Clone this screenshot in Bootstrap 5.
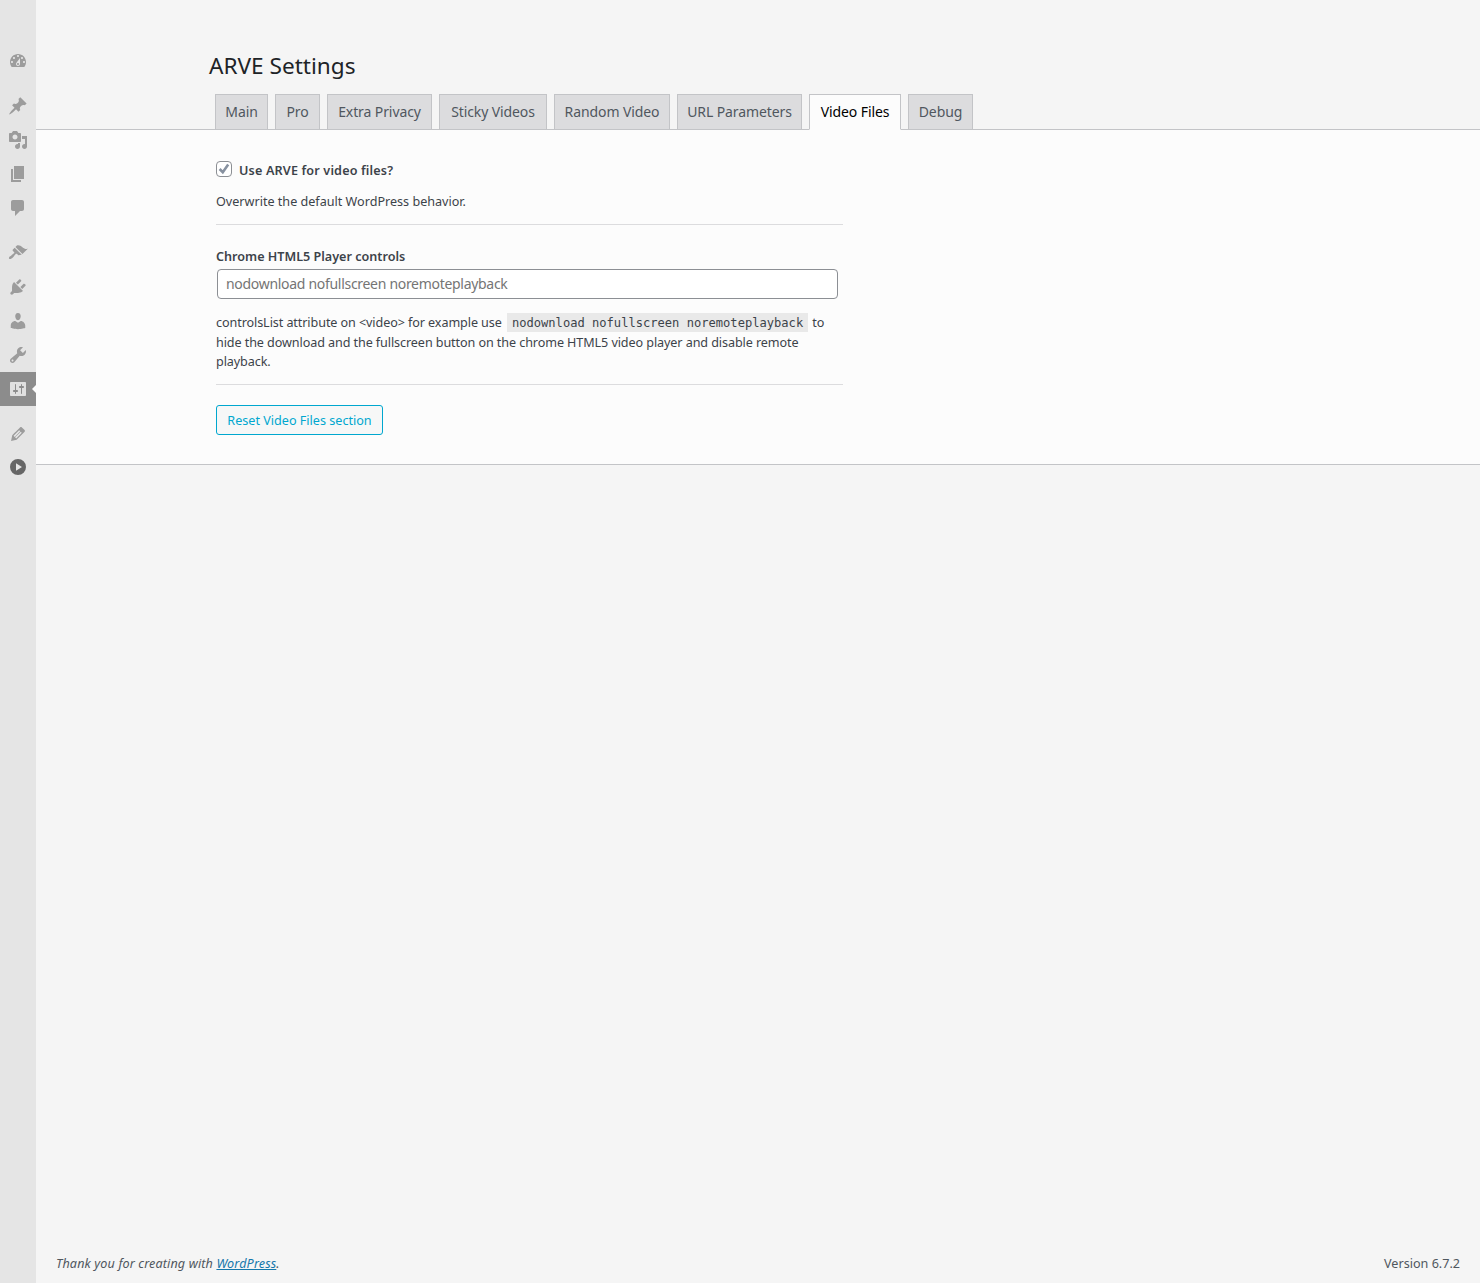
<!doctype html>
<html lang="en"><head><meta charset="utf-8"><title>ARVE Settings</title>
<link href="https://cdn.jsdelivr.net/npm/bootstrap@5.3.0/dist/css/bootstrap.min.css" rel="stylesheet">
<style>
html,body{height:100%;}
body{background:#f5f5f5;color:#3c434a;font-family:"Noto Sans",sans-serif;font-size:12.6px;line-height:19.5px;}
.shell{min-height:1283px;}
.side{width:36px;background:#e5e5e5;padding-top:44px;flex:none;}
.side-item{height:34px;color:#9c9c9c;position:relative;}
.side-item svg{width:20px;height:20px;fill:currentColor;display:block;}
.side-gap{margin-top:11px;}
.side-on{background:#8c8c8c;color:#e0e0e0;}
.side-on::after{content:"";position:absolute;right:0;top:12.5px;border:4.5px solid transparent;border-left-width:0;border-right-color:#fcfcfc;}
.side-dark{color:#666;margin-top:-1px;}
.page-title{font-size:22.6px;line-height:29px;font-weight:400;color:#1d2327;margin:51px 0 14px 173px;}
.tabs{padding-left:179px;gap:7px;border-bottom:1px solid #c3c4c7;}
.tabs .nav-link{padding:5px 0;text-align:center;font-size:14px;letter-spacing:-.1px;line-height:24px;background:#dcdcde;color:#50575e;border:1px solid #c3c4c7;border-radius:0;margin-bottom:-1px;}
.tabs .nav-item:nth-child(1) .nav-link{width:53px;}
.tabs .nav-item:nth-child(2) .nav-link{width:45px;}
.tabs .nav-item:nth-child(3) .nav-link{width:105px;}
.tabs .nav-item:nth-child(4) .nav-link{width:108px;}
.tabs .nav-item:nth-child(5) .nav-link{width:116px;}
.tabs .nav-item:nth-child(6) .nav-link{width:125px;}
.tabs .nav-item:nth-child(7) .nav-link{width:92px;}
.tabs .nav-item:nth-child(8) .nav-link{width:65px;}
.tabs .nav-link.active{background:#fcfcfc;color:#000;border-color:#c3c4c7 #c3c4c7 #fcfcfc;}
.panel{background:#fcfcfc;border-bottom:1px solid #c3c4c7;padding:32px 0 29px 180px;}
.col-box{width:627px;}
.check{height:18px;gap:7px;letter-spacing:.16px;}
.check .form-check-input{width:16px;height:16px;margin:-4px 0 0;flex:none;border:1px solid #8c8f94;border-radius:4px;background-color:#fff;}
.check .form-check-input:checked{background-color:#fff;border-color:#8c8f94;background-size:16px;background-image:url("data:image/svg+xml,%3Csvg xmlns='http://www.w3.org/2000/svg' viewBox='0 0 16 16'%3E%3Cpath fill='none' stroke='%238791a0' stroke-width='2.6' d='M3.6 8l3.2 3.2 5.4-7.6'/%3E%3C/svg%3E");}
.strong-label{font-weight:600;color:#3c434a;font-size:12.6px;}
.desc{margin:12px 0 12px;}
.rule{margin:0;border:0;border-top:1px solid #dcdcde;opacity:1;}
.field-label{display:block;margin:22.5px 0 2px;}
.field{width:621px;height:30px;margin-left:1px;padding:0 8px;font-size:14px;letter-spacing:-.3px;line-height:28px;border:1px solid #8c8f94;border-radius:4px;color:#2c3338;font-family:inherit;box-shadow:none;}
.field::placeholder{color:#757575;opacity:1;}
.help{margin:14.5px 0 12px;letter-spacing:-.09px;}
.help code{font-family:"DejaVu Sans Mono",monospace;font-size:12.1px;line-height:1;letter-spacing:0;color:#3c434a;background:#e9e9e9;padding:3px 5px 2px;margin:0 1px 0 2px;}
.reset{margin-top:20px;width:167px;height:30px;padding:1px 0 0;font-size:12.6px;line-height:27px;color:#00a7cf;border:1px solid #00a7cf;border-radius:3px;background:#f6f7f7;}
.foot{padding:0 20px 10px;color:#50575e;font-size:12.6px;}
.foot .fst-italic{letter-spacing:.13px;}
.foot a{color:#1578ab;}
</style></head>
<body>
<div class="shell d-flex">
  <aside class="side">
    <div class="side-item d-flex align-items-center justify-content-center"><svg viewBox="0 0 20 20"><path d="M3.76 16h12.48c1.1-1.37 1.76-3.11 1.76-5 0-4.42-3.58-8-8-8s-8 3.58-8 8c0 1.89.66 3.63 1.76 5zM10 4c.55 0 1 .45 1 1s-.45 1-1 1-1-.45-1-1 .45-1 1-1zM6 6c.55 0 1 .45 1 1s-.45 1-1 1-1-.45-1-1 .45-1 1-1zm8 0c.55 0 1 .45 1 1s-.45 1-1 1-1-.45-1-1 .45-1 1-1zm-5.37 5.55L12 7v6c0 1.1-.9 2-2 2s-2-.9-2-2c0-.57.24-1.08.63-1.45zM4 10c.55 0 1 .45 1 1s-.45 1-1 1-1-.45-1-1 .45-1 1-1zm12 0c.55 0 1 .45 1 1s-.45 1-1 1-1-.45-1-1 .45-1 1-1zm-5 3c0-.55-.45-1-1-1s-1 .45-1 1 .45 1 1 1 1-.45 1-1z" fill-rule="evenodd"/></svg></div>
    <div class="side-item side-gap d-flex align-items-center justify-content-center"><svg viewBox="0 0 20 20"><path d="M10.44 3.02l1.82-1.82 6.36 6.35-1.83 1.82c-1.05-.68-2.48-.57-3.41.36l-.75.75c-.92.93-1.04 2.35-.35 3.41l-1.83 1.82-2.41-2.41-2.8 2.79c-.42.42-3.38 2.71-3.8 2.29s1.86-3.39 2.28-3.81l2.79-2.79L4.1 9.36l1.83-1.82c1.05.69 2.48.57 3.4-.36l.75-.75c.93-.92 1.05-2.35.36-3.41z"/></svg></div>
    <div class="side-item d-flex align-items-center justify-content-center"><svg viewBox="0 0 20 20"><path d="M13 11V4c0-.55-.45-1-1-1h-1.67L9 1H5L3.67 3H2c-.55 0-1 .45-1 1v7c0 .55.45 1 1 1h10c.55 0 1-.45 1-1zM7 4.5c1.38 0 2.5 1.12 2.5 2.5S8.38 9.5 7 9.5 4.5 8.38 4.5 7 5.62 4.5 7 4.5zM14 6h5v10.5c0 1.38-1.12 2.5-2.5 2.5S14 17.88 14 16.5s1.12-2.5 2.5-2.5c.17 0 .34.02.5.05V9h-3V6zm-4 8.05V13h2v3.5c0 1.38-1.12 2.5-2.5 2.5S7 17.88 7 16.5 8.12 14 9.5 14c.17 0 .34.02.5.05z"/></svg></div>
    <div class="side-item d-flex align-items-center justify-content-center"><svg viewBox="0 0 20 20"><path d="M6 15V2h10v13H6zm-1 1h8v2H3V5h2v11z"/></svg></div>
    <div class="side-item d-flex align-items-center justify-content-center"><svg viewBox="0 0 20 20"><path d="M5 2h9c1.1 0 2 .9 2 2v7c0 1.1-.9 2-2 2h-2l-5 5v-5H5c-1.1 0-2-.9-2-2V4c0-1.1.9-2 2-2z"/></svg></div>
    <div class="side-item side-gap d-flex align-items-center justify-content-center"><svg viewBox="0 0 20 20"><path d="M14.48 11.06L7.41 3.99l1.5-1.5c.5-.56 2.3-.47 3.51.32 1.21.8 1.43 1.28 2.91 2.1 1.18.64 2.45 1.26 4.45.85zm-.71.71L6.7 4.7 4.93 6.47c-.39.39-.39 1.02 0 1.41l1.06 1.06c.39.39.39 1.03 0 1.42-.6.6-1.43 1.11-2.21 1.69-.35.26-.7.53-1.01.84C1.43 13.23.4 14.98 1.2 15.8c.8.79 2.56-.25 3.91-1.61.31-.31.58-.66.85-1.02.57-.78 1.08-1.61 1.69-2.21.39-.39 1.02-.39 1.41 0l1.06 1.06c.39.39 1.02.39 1.41 0z"/></svg></div>
    <div class="side-item d-flex align-items-center justify-content-center"><svg viewBox="0 0 20 20"><path d="M13.11 4.36L9.87 7.6 8 5.73l3.24-3.24c.35-.34 1.05-.2 1.56.32.52.51.66 1.21.31 1.55zm-8 1.77l.91-1.12 9.01 9.01-1.19.84c-.71.71-2.63 1.16-3.82 1.16H6.14L4.9 17.26c-.59.59-1.54.59-2.12 0-.59-.58-.59-1.53 0-2.12l1.24-1.24v-3.88c0-1.13.4-3.19 1.09-3.89zm7.26 3.97l3.24-3.24c.34-.35 1.04-.21 1.55.31.52.51.66 1.21.31 1.55l-3.24 3.25z"/></svg></div>
    <div class="side-item d-flex align-items-center justify-content-center"><svg viewBox="0 0 20 20"><path d="M10 9.25c-2.27 0-2.73-3.44-2.73-3.44C7 4.02 7.82 2 9.97 2c2.16 0 2.98 2.02 2.71 3.81 0 0-.41 3.44-2.68 3.44zm0 2.57L12.72 10c2.39 0 4.52 2.33 4.52 4.53v2.49s-3.65 1.13-7.24 1.13c-3.65 0-7.24-1.13-7.24-1.13v-2.49c0-2.25 1.94-4.48 4.47-4.48z"/></svg></div>
    <div class="side-item d-flex align-items-center justify-content-center"><svg viewBox="0 0 20 20"><path d="M16.68 9.77c-1.34 1.34-3.3 1.67-4.95.99l-5.41 6.52c-.99.99-2.59.99-3.58 0s-.99-2.59 0-3.57l6.52-5.42c-.68-1.65-.35-3.61.99-4.95 1.28-1.28 3.12-1.62 4.72-1.06l-2.89 2.89 2.82 2.82 2.86-2.87c.53 1.58.18 3.39-1.08 4.65zM3.81 16.21c.4.39 1.04.39 1.43 0 .4-.4.4-1.04 0-1.43-.39-.4-1.03-.4-1.43 0-.39.39-.39 1.03 0 1.43z"/></svg></div>
    <div class="side-item side-on d-flex align-items-center justify-content-center"><svg viewBox="0 0 20 20"><path d="M18 16V4c0-.55-.45-1-1-1H3c-.55 0-1 .45-1 1v12c0 .55.45 1 1 1h14c.55 0 1-.45 1-1zM8 11h1c.55 0 1 .45 1 1s-.45 1-1 1H8v1.5c0 .28-.22.5-.5.5s-.5-.22-.5-.5V13H6c-.55 0-1-.45-1-1s.45-1 1-1h1V5.5c0-.28.22-.5.5-.5s.5.22.5.5V11zm5-2h-1c-.55 0-1-.45-1-1s.45-1 1-1h1V5.5c0-.28.22-.5.5-.5s.5.22.5.5V7h1c.55 0 1 .45 1 1s-.45 1-1 1h-1v5.5c0 .28-.22.5-.5.5s-.5-.22-.5-.5V9z"/></svg></div>
    <div class="side-item side-gap d-flex align-items-center justify-content-center"><svg viewBox="0 0 20 20"><path d="M13.89 3.39l2.71 2.72c.46.46.42 1.24.03 1.64l-8.01 8.02-5.56 1.16 1.16-5.58s7.6-7.63 7.99-8.03c.39-.39 1.22-.39 1.68.07zm-2.73 2.79l-5.59 5.61 1.11 1.11 5.54-5.65zm-2.97 8.23l5.58-5.6-1.07-1.08-5.59 5.6z"/></svg></div>
    <div class="side-item side-dark d-flex align-items-center justify-content-center"><svg viewBox="0 0 20 20"><path fill-rule="evenodd" d="M10 2a8 8 0 1 1 0 16 8 8 0 0 1 0-16zM8 6.2v7.6l6-3.8z"/></svg></div>
  </aside>
  <div class="flex-grow-1 d-flex flex-column">
    <main>
      <h1 class="page-title">ARVE Settings</h1>
      <ul class="nav nav-tabs tabs">
        <li class="nav-item"><a class="nav-link" href="#">Main</a></li>
        <li class="nav-item"><a class="nav-link" href="#">Pro</a></li>
        <li class="nav-item"><a class="nav-link" href="#">Extra Privacy</a></li>
        <li class="nav-item"><a class="nav-link" href="#">Sticky Videos</a></li>
        <li class="nav-item"><a class="nav-link" href="#">Random Video</a></li>
        <li class="nav-item"><a class="nav-link" href="#">URL Parameters</a></li>
        <li class="nav-item"><a class="nav-link active" href="#">Video Files</a></li>
        <li class="nav-item"><a class="nav-link" href="#">Debug</a></li>
      </ul>
      <section class="panel">
        <div class="col-box">
          <label class="check d-flex align-items-center strong-label">
            <input class="form-check-input" type="checkbox" checked>
            <span>Use ARVE for video files?</span>
          </label>
          <p class="desc">Overwrite the default WordPress behavior.</p>
          <hr class="rule">
          <label class="field-label strong-label" for="controls">Chrome HTML5 Player controls</label>
          <input id="controls" class="form-control field" type="text" placeholder="nodownload nofullscreen noremoteplayback">
          <p class="help">controlsList attribute on &lt;video&gt; for example use <code>nodownload nofullscreen noremoteplayback</code> to hide the download and the fullscreen button on the chrome HTML5 video player and disable remote playback.</p>
          <hr class="rule">
          <button type="button" class="btn reset d-block">Reset Video Files section</button>
        </div>
      </section>
    </main>
    <footer class="foot mt-auto d-flex justify-content-between">
      <span class="fst-italic">Thank you for creating with <a href="#">WordPress</a>.</span>
      <span>Version 6.7.2</span>
    </footer>
  </div>
</div>
</body></html>
